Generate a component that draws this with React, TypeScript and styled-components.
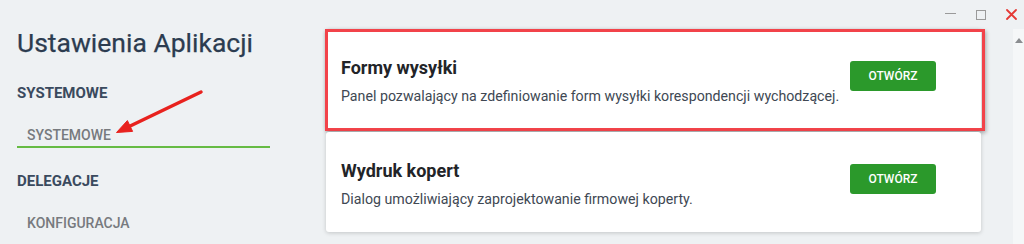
import React from "react";
import styled, { createGlobalStyle } from "styled-components";

const Global = createGlobalStyle`
  html, body { margin: 0; padding: 0; background: #eef1f3; }
  body { font-family: Roboto, "Liberation Sans", Arial, sans-serif; }
  * { box-sizing: border-box; }
`;

const Window = styled.div`
  position: relative;
  width: 1024px;
  height: 244px;
  overflow: hidden;
  background: #eef1f3;
  display: grid;
  grid-template-columns: 325px 1fr 11px;
  grid-template-rows: 29px 1fr;
`;

const Sidebar = styled.aside`
  grid-row: 1 / span 2;
  grid-column: 1;
  padding: 27px 55px 0 17px;
  display: flex;
  flex-direction: column;
`;

const AppTitle = styled.h1`
  margin: 0;
  font-size: 26.5px;
  line-height: 32px;
  font-weight: 400;
  color: #2c3c50;
  white-space: nowrap;
  -webkit-text-stroke: 0.25px #2c3c50;
`;

const Section = styled.section<{ $first?: boolean }>`
  margin-top: ${(p) => (p.$first ? 24 : 23)}px;
  display: flex;
  flex-direction: column;
`;

const SectionHeader = styled.div`
  font-size: 15px;
  line-height: 20px;
  font-weight: 700;
  color: #3a4a5e;
  margin-bottom: 15px;
`;

const NavItem = styled.div<{ $active?: boolean }>`
  padding: 8px 10px 2px;
  font-size: 14px;
  line-height: 18px;
  font-weight: 500;
  color: #777a7e;
  border-bottom: 2px solid ${(p) => (p.$active ? "#66bb44" : "transparent")};
`;

const Controls = styled.div`
  grid-row: 1;
  grid-column: 2 / span 2;
  display: flex;
  justify-content: flex-end;
  align-items: center;
  gap: 20px;
  padding: 0 7px 0 0;
`;

const Minimize = styled.span`
  width: 11px;
  height: 1px;
  margin-top: -3px;
  background: #9a9a9a;
`;

const Maximize = styled.span`
  width: 10px;
  height: 10px;
  border: 1px solid #9a9a9a;
`;

const CloseBtn = styled.span`
  display: flex;
  width: 11px;
  height: 11px;
`;

const Main = styled.main`
  grid-row: 2;
  grid-column: 2;
  padding: 0 32px 0 1px;
  display: flex;
  flex-direction: column;
  gap: 3px;
`;

const CardWrap = styled.div`
  position: relative;
`;

const Card = styled.div`
  height: 100px;
  background: #ffffff;
  border-radius: 3px;
  box-shadow: 0 1px 4px rgba(0, 0, 0, 0.18);
  padding: 27px 45px 0 15px;
  display: flex;
  justify-content: space-between;
  align-items: flex-start;
`;

const Highlight = styled.div`
  position: absolute;
  top: 0;
  left: -1px;
  right: -4px;
  bottom: -2px;
  border: 3px solid #f2434a;
  box-shadow: 1px 2px 4px rgba(0, 0, 0, 0.3);
  pointer-events: none;
`;

const CardText = styled.div`
  display: flex;
  flex-direction: column;
`;

const CardTitle = styled.h2`
  margin: 0;
  font-size: 18px;
  line-height: 24px;
  font-weight: 700;
  color: #222428;
`;

const CardDesc = styled.p`
  margin: 6px 0 0;
  font-size: 14.2px;
  line-height: 20px;
  font-weight: 400;
  color: #404853;
`;

const OpenButton = styled.button`
  margin-top: 5px;
  width: 86px;
  height: 30px;
  border: none;
  border-radius: 3px;
  background: #2b992b;
  color: #ffffff;
  font-family: inherit;
  font-size: 12px;
  font-weight: 500;
  text-transform: uppercase;
  cursor: pointer;
`;

const Scrollbar = styled.div`
  grid-row: 2;
  grid-column: 3;
  background: #f5f7f8;
  display: flex;
  justify-content: center;
  padding-top: 9px;
`;

const ArrowUp = styled.span`
  width: 0;
  height: 0;
  border-left: 4px solid transparent;
  border-right: 4px solid transparent;
  border-bottom: 5px solid #8a8d90;
`;

const Annotation = styled.svg`
  position: absolute;
  left: 0;
  top: 0;
  pointer-events: none;
`;

const cards = [
  {
    title: "Formy wysyłki",
    desc: "Panel pozwalający na zdefiniowanie form wysyłki korespondencji wychodzącej.",
    highlighted: true,
  },
  {
    title: "Wydruk kopert",
    desc: "Dialog umożliwiający zaprojektowanie firmowej koperty.",
    highlighted: false,
  },
];

export default function App() {
  return (
    <>
      <Global />
      <Window>
        <Sidebar>
          <AppTitle>Ustawienia Aplikacji</AppTitle>
          <Section $first>
            <SectionHeader>SYSTEMOWE</SectionHeader>
            <NavItem $active>SYSTEMOWE</NavItem>
          </Section>
          <Section>
            <SectionHeader>DELEGACJE</SectionHeader>
            <NavItem>KONFIGURACJA</NavItem>
          </Section>
        </Sidebar>
        <Controls>
          <Minimize />
          <Maximize />
          <CloseBtn>
            <svg width="11" height="11" viewBox="0 0 11 11">
              <path d="M1 1 L10 10 M10 1 L1 10" stroke="#e53935" strokeWidth="1.8" strokeLinecap="round" />
            </svg>
          </CloseBtn>
        </Controls>
        <Main>
          {cards.map((c) => (
            <CardWrap key={c.title}>
              <Card>
                <CardText>
                  <CardTitle>{c.title}</CardTitle>
                  <CardDesc>{c.desc}</CardDesc>
                </CardText>
                <OpenButton>Otwórz</OpenButton>
              </Card>
              {c.highlighted && <Highlight />}
            </CardWrap>
          ))}
        </Main>
        <Scrollbar>
          <ArrowUp />
        </Scrollbar>
        <Annotation width="240" height="150" viewBox="0 0 240 150">
          <line x1="201" y1="92" x2="126" y2="128" stroke="#e8221e" strokeWidth="3.5" strokeLinecap="round" />
          <polygon points="116.5,132.5 127.4,120.6 132.6,131.4" fill="#e8221e" stroke="#e8221e" strokeWidth="1" strokeLinejoin="round" />
        </Annotation>
      </Window>
    </>
  );
}
